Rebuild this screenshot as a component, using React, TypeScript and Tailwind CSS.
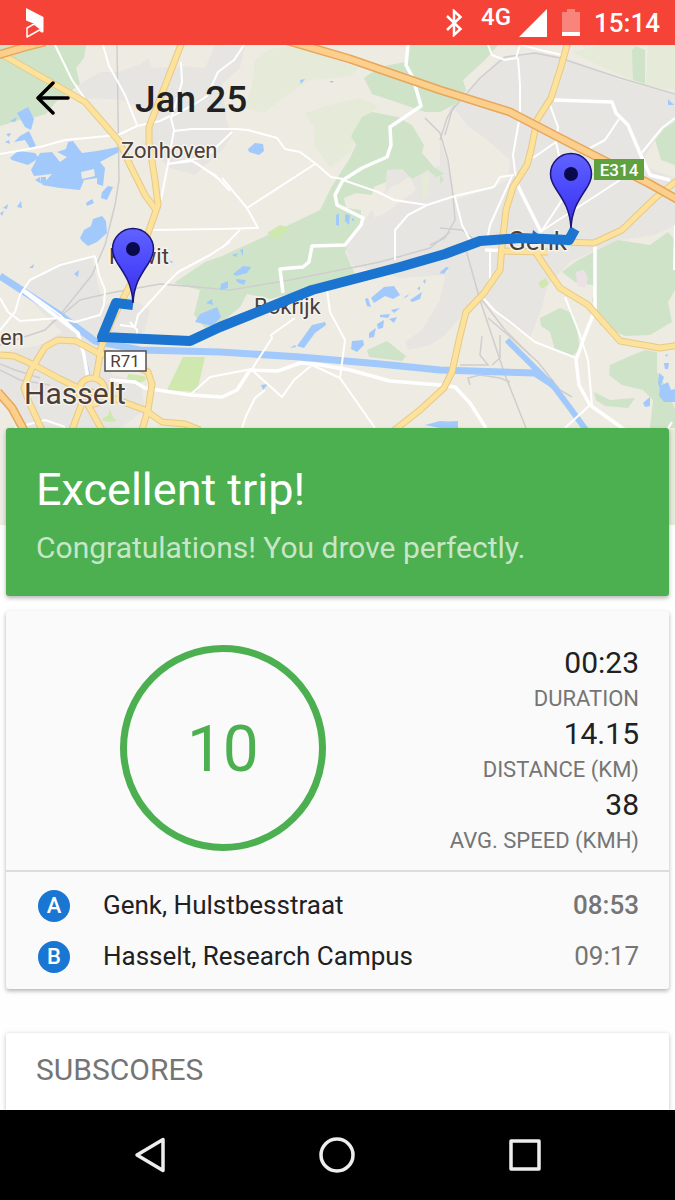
import React from 'react';

interface Stat {
  value: string;
  label: string;
}

interface Stop {
  letter: string;
  place: string;
  time: string;
  bold: boolean;
}

const stats: Stat[] = [
  { value: '00:23', label: 'DURATION' },
  { value: '14.15', label: 'DISTANCE (KM)' },
  { value: '38', label: 'AVG. SPEED (KMH)' },
];

const stops: Stop[] = [
  { letter: 'A', place: 'Genk, Hulstbesstraat', time: '08:53', bold: true },
  { letter: 'B', place: 'Hasselt, Research Campus', time: '09:17', bold: false },
];

// Map geometry, one string per shape
const urban = [
  '78,85 100,72 118,72 140,64 148,58 152,68 182,66 205,68 215,45 245,47 240,68 222,84 226,118 232,135 222,150 205,165 195,175 170,168 150,150 120,120 118,100 80,98',
  '463,95 500,58 540,52 570,60 620,80 675,95 675,125 655,140 640,165 675,178 675,225 655,235 620,240 600,248 570,262 548,285 541,310 530,338 505,322 480,297 465,312 445,335 430,345 408,350 405,342 422,330 440,300 445,275 400,278 352,265 345,248 375,205 385,192 387,170 400,168 412,178 440,165 440,130 450,108',
  '20,290 38,275 62,262 92,257 98,285 104,305 130,297 150,310 145,330 135,338 108,342 112,375 140,380 145,410 120,428 30,428 0,400 0,352 40,345 62,332 48,318',
];

const cream = [
  '440,115 455,110 470,128 485,138 510,160 508,180 492,188 455,200 450,170 440,140',
  '150,110 120,100 95,98 85,104 118,140 148,142',
  '390,188 400,183 410,176 416,190 390,210 375,218 372,208',
];

const paleGreen = [
  '255,60 270,49 292,46 330,58 360,68 350,76 310,80 282,98 265,113 245,108 252,85',
  '305,113 330,105 360,98 378,106 372,112 362,122 354,135 352,150 340,160 330,167 314,145 315,128',
  '572,52 600,45 635,45 640,62 632,80 600,66',
  '648,45 675,45 675,90 646,86',
  '422,175 430,172 428,198 422,198',
  '669,430 675,430 675,525 669,525',
];

const green = [
  '0,45 86,45 84,58 76,68 80,84 68,93 56,102 46,114 36,117 26,118 0,126',
  '410,45 498,45 485,60 463,80 466,90 457,103 440,112 425,112 402,104 372,94 364,78 380,67 405,62',
  '362,117 372,112 398,117 412,125 424,145 422,153 434,167 444,174 436,177 428,170 412,179 402,169 387,170 386,182 374,187 372,195 356,193 344,198 346,208 361,210 361,224 350,240 345,252 355,274 330,282 300,291 270,299 247,294 240,307 222,322 205,328 194,315 200,290 174,283 205,262 222,256 270,234 320,210 332,186 350,158 356,145 351,136',
  '597,250 618,240 650,245 668,232 675,240 675,290 668,302 672,322 650,335 625,336 600,325 592,300 597,286 575,282 562,272 575,262',
  '540,318 560,308 573,313 577,330 580,350 570,357 555,350 550,332 541,326',
  '610,365 630,356 645,350 657,352 657,372 668,390 675,410 675,428 650,428 653,400 643,390 622,385 609,375',
  '594,392 610,400 635,398 628,408 605,406 596,400',
  '655,140 665,128 675,122 675,165 661,160',
  '632,50 636,46 645,50 645,84 633,80',
  '367,350 387,341 406,356 402,361 369,357',
  '440,175 444,180 440,184',
  '610,245 620,241 622,247',
];

const lime = [
  '267,233 280,225 291,228 276,240',
  '183,357 205,357 197,392 167,390',
  '128,374 145,376 146,380 137,384 127,379',
  '101,420 108,415 110,409 113,417 117,421 109,422',
  '538,283 545,278 549,284 542,289',
];

const lakes = [
  '17,113 28,107 34,119 31,130 25,127',
  '20,136 29,131 36,146 30,148 25,140 14,142',
  '10,121 17,117 15,122',
  '6,134 11,133 9,137',
  '5,142 9,140 10,144',
  '10,158 18,151 35,153 39,158 28,165 12,160',
  '31,170 40,153 52,152 60,162 67,157 57,152 66,149 68,142 73,141 82,153 97,151 118,147 119,152 100,162 105,168 103,186 97,184 97,178 84,180 80,190 60,188 42,185 52,174 34,176',
  '35,180 40,177 40,183',
  '41,177 46,177 46,185 40,183',
  '102,192 108,186 113,187 107,200 101,198',
  '86,203 92,199 94,203 87,206',
  '17,207 21,201 22,208',
  '3,208 8,204 7,209',
  '0,213 4,211 2,216',
  '80,238 84,230 91,226 93,219 102,216 106,221 107,233 97,242 88,246 82,241',
  '29,268 34,264 33,268',
  '74,274 79,270 78,277',
  '168,260 174,262 171,263',
  '195,322 200,314 210,310 217,307 221,317 213,326',
  '206,303 212,299 213,305',
  '221,284 228,281 228,288 220,290',
  '233,274 243,266 251,267 247,273 236,276',
  '236,279 246,280 244,285 237,282',
  '232,255 238,253 236,257',
  '240,250 243,249 243,256',
  '248,149 255,143 263,144 264,151 259,155 249,152',
  '300,80 305,79 301,84',
  '329,81 334,81 332,83',
  '336,215 339,213 339,226 336,225',
  '345,214 350,215 349,225 345,221',
  '352,218 355,220 352,221',
  '297,346 312,325 325,322 326,325 315,333 304,348',
  '290,348 295,345 296,347',
  '371,298 384,287 394,286 400,295 393,299 385,296 374,303',
  '365,299 368,298 371,307 367,306',
  '352,341 363,340 364,345 357,352 351,349',
  '369,333 376,328 374,337 369,338',
  '377,324 384,320 383,328 378,329',
  '380,315 390,314 388,318 380,317',
  '391,310 400,308 394,313',
  '389,319 397,317 394,323',
  '403,298 409,294 407,297',
  '410,300 422,292 420,299 412,302',
  '417,289 420,286 420,290',
  '423,281 426,279 425,284',
  '440,272 448,267 444,274',
  '439,274 446,267 449,268 443,273',
  '668,99 674,105 668,105',
  '659,373 664,377 660,388 658,384',
  '660,386 668,382 671,390 675,389 675,402 664,402 659,396',
  '643,403 650,397 650,406 645,407',
  '665,355 668,354 667,357',
  '664,363 669,363 668,369 665,369',
  '440,422 458,421 458,428 440,428',
  '425,425 440,421 452,422 450,427 440,428',
  '261,385 268,384 263,390',
];

const whiteRoads = [
  'M55 45 L72 80 L87 102',
  'M103 45 L109 66 L118 82 L125 95 L137 125',
  'M0 154 L40 147 L65 140 L118 135 L137 126 L160 121 L170 116',
  'M181 62 L182 82 L177 100 L171 118 L174 130 L168 164 L161 200',
  'M174 131 L192 129 L236 129 L248 130',
  'M244 45 L234 60 L218 72 L207 96 L198 102 L171 117',
  'M232 132 L206 157 L168 164 L192 161 L215 175 L230 191',
  'M195 162 L220 180',
  'M248 130 L277 138 L285 149 L300 152 L316 164 L331 177 L343 179',
  'M315 164 L247 208 L222 178',
  'M247 208 L258 228 L220 229 L150 230',
  'M240 230 L222 248',
  'M343 180 L378 192 L394 200 L427 205 L455 196 L494 187 L500 177 L514 175',
  'M427 205 L408 215 L395 230 L395 260',
  'M488 45 L492 55 L505 60 L516 58 L520 45',
  'M518 58 L520 85 L520 115 L513 155 L515 172 L520 190 L541 232',
  'M522 45 L540 50 L566 56',
  'M512 176 L490 225 L487 240',
  'M455 197 L462 225 L470 240',
  'M619 119 L605 140 L590 148',
  'M550 105 L558 127 L556 142 L560 160 L570 172',
  'M556 142 L533 158',
  'M675 118 L662 128 L640 155',
  'M541 232 L562 200',
  'M540 232 L620 180',
  'M95 256 L60 265 L30 280 L20 295 L15 312 L0 330',
  'M95 256 L99 275 L105 290 L104 305 L100 315 L75 322 L60 318 L20 321 L8 312 L0 298',
  'M25 290 L60 315 L80 335',
  'M190 395 L210 377 L252 369 L272 338 L271 335 L295 318',
  'M252 370 L282 397 L294 380 L312 365 L340 378 L375 428',
  'M265 390 L255 398 L246 416 L242 428',
  'M327 290 L330 312 L345 340 L340 378',
  'M130 322 L137 330 L137 338',
  'M120 325 L135 327 L138 315 L170 280 L178 272 L210 255 L230 242',
  'M490 250 L490 280 L483 300',
  'M565 297 L580 335 L588 360 L592 405',
  'M590 405 L565 428',
  'M576 358 L535 342 L510 322 L495 311 L484 299',
  'M675 225 L674 270',
  'M15 428 L45 420 L65 427',
  'M667 430 L672 422',
];

// Wider local roads
const mainRoads = [
  'M408 45 L406 65 L413 78 L421 106 L390 127 L391 145 L387 157 L362 168 L343 180 L335 195 L337 205 L363 218 L361 225 L345 245 L312 246 L309 262 L303 267 L280 269 L283 293',
  'M554 100 L612 102 L616 113 L628 125 L642 158 L650 175 L670 180',
  'M515 180 L541 232',
  'M22 290 L78 333 L84 355 L88 378',
  'M110 380 L135 382 L145 388 L190 395 L222 397 L237 390 L250 370 L278 371 L300 363 L315 364 L350 370 L390 381 L440 385 L455 387 L470 403 L486 428',
  'M485 250 L545 252',
  'M595 245 L595 310 L585 335 L576 360 L579 385 L590 405 L625 430',
];

const rails = [
  'M117 45 L119 180 L115 205 L105 245 L92 275 L60 315 L45 330 L0 345',
  'M50 325 L80 300 L110 293 L160 284 L185 286 L230 290 L290 280 L380 262 L430 248 L450 232',
  'M445 135 L452 110 L480 78 L505 57 L535 53 L560 58 L620 78 L675 94',
  'M425 118 L440 133 L448 160 L453 195 L455 220 L445 238 L430 245',
  'M440 140 L447 118 L455 105',
  'M466 250 L480 300 L490 330 L505 375 L526 428',
  'M482 300 L505 330 L530 355',
  'M488 318 L508 335 L538 362 L560 390 L572 397',
  'M470 385 L468 378 L480 375 L500 378 L510 382',
  'M482 336 L480 355 L488 365 L460 365',
  'M500 335 L500 358 L492 365',
  'M440 228 L462 230 L475 240',
  'M0 364 L15 370 L40 378',
  'M0 370 L20 380 L50 385',
];

const yellowRoads = [
  'M3 55 L45 79 L85 102 L119 141 L130 165 L145 195 L156 210',
  'M182 42 L170 73 L149 127 L149 142 L155 180 L158 205 L152 222 L147 236 L130 285 L112 320 L101 348 L96 378',
  'M0 355 L14 356 L30 363 L60 379 L80 389 L110 397 L145 410 L162 422 L185 424 L200 430',
  'M42 430 L29 402 L24 388 L31 370 L45 347 L58 340 L76 341 L98 353 L128 362 L148 372 L152 384 L148 410 L142 430',
  'M82 403 L72 430',
  'M88 405 L102 430',
  'M568 42 L560 70 L551 98 L537 120 L531 150 L527 165 L513 187 L506 210 L502 245 L500 270 L484 293 L466 312 L459 340 L452 372 L444 388 L420 410 L392 432',
  'M678 180 L655 198 L622 230 L594 243 L560 242',
  'M500 251 L548 252',
  'M536 253 L560 288 L588 305 L620 341 L660 348 L680 345',
];

const orangeRoads = [
  'M-2 55 L25 47 L45 42',
  'M285 40 L350 59 L440 90 L510 112 L560 138 L605 161 L650 184 L680 201',
  'M-2 392 L12 408 L25 432',
];

function Pin({ x, y }: { x: number; y: number }) {
  return (
    <g transform={`translate(${x} ${y})`}>
      <path
        d="M0 54 C-1 36 -7 27 -15 15 C-19 9 -20.500 5 -20.500 0 A20.500 20.500 0 0 1 20.500 0 C20.500 5 19 9 15 15 C7 27 1 36 0 54 Z"
        fill="url(#pin)"
        stroke="#1b1579"
        strokeWidth="1.500"
      />
      <circle r="7" fill="#090a4e" />
    </g>
  );
}

function TripMap() {
  return (
    <svg
      viewBox="0 45 675 480"
      preserveAspectRatio="xMidYMin slice"
      className="h-full w-full"
      role="img"
      aria-label="Route"
    >
      <defs>
        <linearGradient id="pin" x1="0" y1="0" x2="0" y2="1">
          <stop offset="0" stopColor="#6163ff" />
          <stop offset="0.500" stopColor="#4a47fb" />
          <stop offset="1" stopColor="#3d2fe0" />
        </linearGradient>
      </defs>
      <rect x="0" y="45" width="675" height="480" fill="#eeebe3" />
      <g fill="#e7e5e2">{urban.map((p) => <polygon key={p} points={p} />)}</g>
      <g fill="#eeebe3">{cream.map((p) => <polygon key={p} points={p} />)}</g>
      <g fill="#e5ead9">{paleGreen.map((p) => <polygon key={p} points={p} />)}</g>
      <g fill="#cfe3c9">{green.map((p) => <polygon key={p} points={p} />)}</g>
      <g fill="#cfe8b0">{lime.map((p) => <polygon key={p} points={p} />)}</g>
      <polygon points="576,272 584,270 588,278 585,288 577,286" fill="#ece2e6" />

      <g fill="none" stroke="#cfcecf" strokeWidth="1.500">
        {rails.map((d) => <path key={d} d={d} />)}
      </g>
      <g fill="#a1c9fc">{lakes.map((p) => <polygon key={p} points={p} />)}</g>
      <polygon points="81,172 94,169 95,176 82,179" fill="#eeebe3" />
      <g fill="none" stroke="#a1c9fc" strokeLinejoin="round">
        <path d="M0 276 L60 315 L95 341 L140 350 L220 352 L300 357 L380 364 L440 370 L535 373 L552 384" strokeWidth="7" />
        <path d="M507 340 L535 368 L555 388 L570 408 L586 430" strokeWidth="6" />
        <path d="M79 335 L84 355 L89 376" strokeWidth="3" />
      </g>

      <g fill="none" stroke="#ffffff" strokeLinejoin="round">
        <g strokeWidth="2">{whiteRoads.map((d) => <path key={d} d={d} />)}</g>
        <g strokeWidth="3.500">{mainRoads.map((d) => <path key={d} d={d} />)}</g>
      </g>
      <g fill="none" strokeLinejoin="round">
        <g stroke="#e6c987" strokeWidth="7">
          {yellowRoads.map((d) => <path key={d} d={d} />)}
          <circle cx="92" cy="391" r="13" />
        </g>
        <g stroke="#fde29c" strokeWidth="5">
          {yellowRoads.map((d) => <path key={d} d={d} />)}
          <circle cx="92" cy="391" r="13" />
        </g>
        <g stroke="#e5a75c" strokeWidth="9">{orangeRoads.map((d) => <path key={d} d={d} />)}</g>
        <g stroke="#fdcf8c" strokeWidth="6">{orangeRoads.map((d) => <path key={d} d={d} />)}</g>
      </g>

      {/* place names */}
      <g
        className="font-[Roboto,sans-serif] [paint-order:stroke]"
        fill="#4b4038"
        stroke="#f6f3ee"
        strokeWidth="3"
        strokeLinejoin="round"
      >
        <text x="121" y="158" className="text-[22px]">Zonhoven</text>
        <text x="109" y="264" className="text-[22px]">Kiewit</text>
        <text x="254" y="314" className="text-[22px]">Bokrijk</text>
        <text x="0" y="345" className="text-[22px]">en</text>
        <text x="508" y="250" className="text-[26px]">Genk</text>
        <text x="24" y="404" className="text-[30px]">Hasselt</text>
      </g>
      <rect x="105" y="351" width="41" height="20" fill="#fff" stroke="#55504b" strokeWidth="1.500" />
      <text x="125" y="367" textAnchor="middle" fill="#4b4038" className="font-[Roboto,sans-serif] text-[17px]">R71</text>
      <rect x="594" y="159" width="50" height="21" fill="#60a03e" />
      <text x="619" y="176" textAnchor="middle" fill="#fff" className="font-[Roboto,sans-serif] text-[17px] font-medium">E314</text>

      {/* driven route */}
      <path
        d="M133 305 L116 303 L102 337 L190 341 L220 327 L312 290 L400 267 L445 254 L480 241 L520 238 L569 240 L575 229"
        fill="none"
        stroke="#1b75d0"
        strokeWidth="10"
        strokeLinejoin="round"
      />
      <polygon points="97,342 102,331 112,342" fill="#1b75d0" />
      <polygon points="533,230 543,238 531,242" fill="#1b75d0" />
      <Pin x={133} y={249} />
      <Pin x={571} y={174} />
    </svg>
  );
}

function StatusBar() {
  return (
    <div className="flex h-[45px] items-center bg-[#f64337] pr-[15px] pl-[26px] text-white">
      <svg viewBox="0 0 18 30" className="h-[30px] w-[18px]">
        <path d="M0 0 L17.500 9 V24.500 L9 16 L0 12.500 Z" fill="#fff" />
        <path d="M1 29 V20 L8 16 L16 22 V24 L13.500 22 Z" fill="none" stroke="#fff" strokeWidth="1.500" strokeLinejoin="round" />
      </svg>
      <div className="ml-auto flex items-center">
        <svg viewBox="0 0 18 28" className="h-7 w-[18px]">
          <path d="M2 7 L15.500 20 L9 26 V2 L15.500 8 L2 21" fill="none" stroke="#fff" strokeWidth="2.500" />
        </svg>
        <span className="ml-[18px] pb-3 text-[24px] leading-7 font-medium">4G</span>
        <svg viewBox="0 0 28 28" className="ml-2 h-7 w-7">
          <path d="M28 0 V28 H0 Z" fill="#fff" />
        </svg>
        <svg viewBox="0 0 18 27" className="ml-[15px] h-[27px] w-[18px]">
          <path d="M0 3 H5 V0 H13 V3 H18 V27 H0 Z" fill="#fff" fillOpacity="0.350" />
          <path d="M0 23 H18 V27 H0 Z" fill="#fff" />
        </svg>
        <span className="ml-[14px] text-[26px] leading-[30px] font-medium">15:14</span>
      </div>
    </div>
  );
}

function NavBar() {
  return (
    <nav className="grid h-[90px] grid-cols-3 bg-black px-14">
      <button type="button" aria-label="Back" className="flex items-center justify-center">
        <svg viewBox="0 0 36 36" className="h-9 w-9" fill="none" stroke="#eee" strokeWidth="3.500" strokeLinejoin="round">
          <path d="M31 2.500 V33.500 L5 18 Z" />
        </svg>
      </button>
      <button type="button" aria-label="Home" className="flex items-center justify-center">
        <svg viewBox="0 0 36 36" className="h-9 w-9" fill="none" stroke="#eee" strokeWidth="3.500">
          <circle cx="18" cy="18" r="16" />
        </svg>
      </button>
      <button type="button" aria-label="Recent apps" className="flex items-center justify-center">
        <svg viewBox="0 0 36 36" className="h-9 w-9" fill="none" stroke="#eee" strokeWidth="3.500" strokeLinejoin="round">
          <rect x="4" y="4" width="28" height="28" />
        </svg>
      </button>
    </nav>
  );
}

const App: React.FC = () => {
  return (
    <div className="flex min-h-screen flex-col bg-[#fefefe] font-[Roboto,sans-serif] text-[#212121]">
      <StatusBar />

      <header className="relative h-[480px]">
        <TripMap />
        <div className="absolute inset-x-0 top-0 flex items-start pt-[33px] pl-9">
          <button type="button" aria-label="Back" className="py-[3px]">
            <svg viewBox="0 0 34 34" className="h-[34px] w-[34px]" fill="none" stroke="#000" strokeWidth="3.500" strokeLinecap="round" strokeLinejoin="round">
              <path d="M32 17 H2 M17 2 L2 17 L17 32" />
            </svg>
          </button>
          <h1 className="ml-[65px] text-[37px] leading-[44px] font-medium">Jan 25</h1>
        </div>
      </header>

      <main className="relative -mt-[97px] flex flex-1 flex-col px-1.5">
        <section className="rounded-[3px] bg-[#4caf50] px-[30px] pt-[34px] pb-[30px] text-white shadow-[0_2px_4px_rgba(0,0,0,0.3)]">
          <h2 className="text-[45px] leading-[56px]">Excellent trip!</h2>
          <p className="mt-3 text-[30px] leading-9 text-white/70">Congratulations! You drove perfectly.</p>
        </section>

        <section className="mt-[15px] rounded-[3px] bg-[#fafafa] shadow-[0_2px_4px_rgba(0,0,0,0.3)]">
          <div className="flex gap-2.5 border-b-2 border-[#dcdcdc] pt-[34px] pr-[30px] pb-3">
            <div className="flex flex-1 items-start justify-center">
              <div className="flex h-[206px] w-[206px] items-center justify-center rounded-full border-[7px] border-[#4caf50] pt-1 text-[64px] text-[#4caf50]">
                10
              </div>
            </div>
            <dl className="text-right">
              {stats.map((stat) => (
                <div key={stat.label} className="flex flex-col-reverse">
                  <dt className="text-[22px] leading-[35px] text-[#757575]">{stat.label}</dt>
                  <dd className="text-[30px] leading-9">{stat.value}</dd>
                </div>
              ))}
            </dl>
          </div>
          <ul className="pt-2 pr-[30px] pb-[7px] pl-8 text-[26px] leading-[51px]">
            {stops.map((stop) => (
              <li key={stop.letter} className="flex items-center">
                <span className="flex h-8 w-8 items-center justify-center rounded-full bg-[#1976d2] text-[22px] leading-8 font-medium text-white">
                  {stop.letter}
                </span>
                <span className="ml-[33px]">{stop.place}</span>
                <span className={stop.bold ? 'ml-auto font-medium text-[#757575]' : 'ml-auto text-[#757575]'}>
                  {stop.time}
                </span>
              </li>
            ))}
          </ul>
        </section>

        <section className="mt-11 flex-1 rounded-t-[3px] bg-white px-[30px] pt-[19px] shadow-[0_1px_4px_rgba(0,0,0,0.25)]">
          <h2 className="text-[30px] leading-9 text-[#757575]">SUBSCORES</h2>
        </section>
      </main>

      <NavBar />
    </div>
  );
};

export default App;
